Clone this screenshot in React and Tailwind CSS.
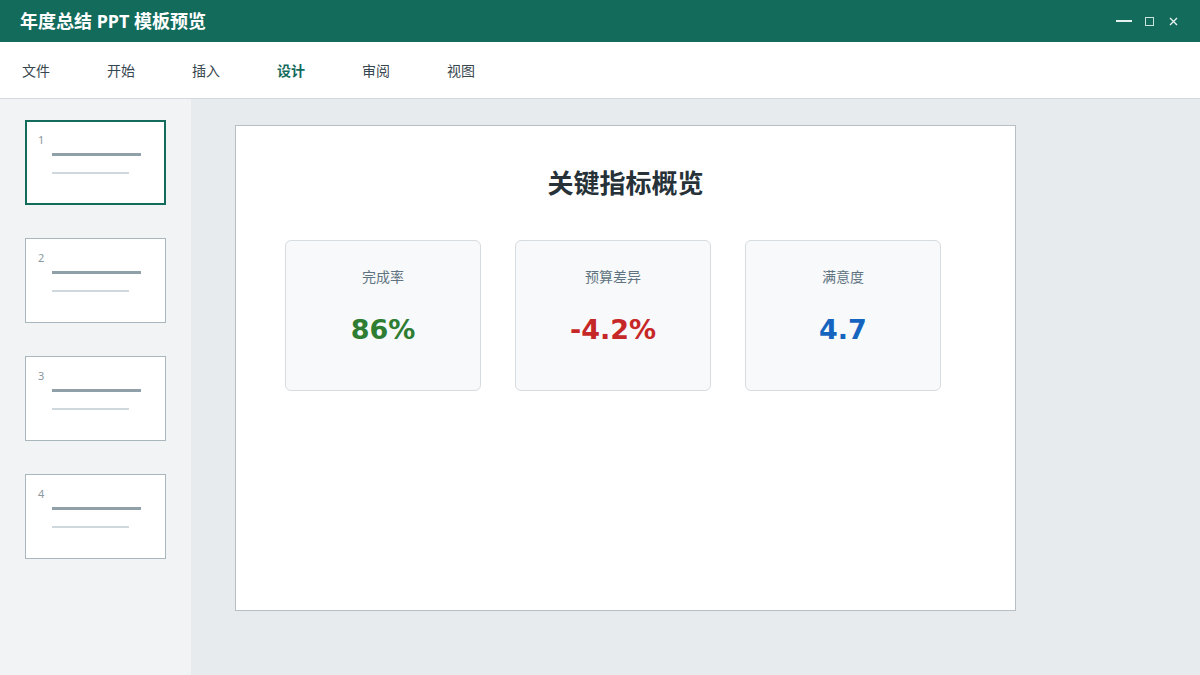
import React from 'react';

const menus = ['文件', '开始', '插入', '设计', '审阅', '视图'];
const slides = [1, 2, 3, 4];
const metrics = [
    { label: '完成率', value: '86%', color: 'text-[#2e7d32]' },
    { label: '预算差异', value: '-4.2%', color: 'text-[#c62828]' },
    { label: '满意度', value: '4.7', color: 'text-[#1565c0]' },
];

const App = () => {
    return (
        <div
            className="w-[1200px] h-[675px] flex flex-col overflow-hidden bg-[#e8ebee]"
            style={{ fontFamily: "'Noto Sans', 'Noto Sans CJK SC', sans-serif" }}
        >
            {/* title bar */}
            <div className="h-[42px] shrink-0 bg-[#136b5c] flex items-center justify-between pl-5 pr-[22px]">
                <h1 className="text-white text-[18px] font-bold leading-none">年度总结 PPT 模板预览</h1>
                <div className="flex items-center gap-[13px] text-[#dfeeea]">
                    <span className="block w-[16px] h-[2px] bg-[#e6f2ef]"></span>
                    <span className="block w-[9px] h-[9px] border border-[#cfe3de]"></span>
                    <svg width="9" height="9" viewBox="0 0 9 9" className="ml-[2px]">
                        <path d="M1 1L8 8M8 1L1 8" stroke="#e6f2ef" strokeWidth="1.4" />
                    </svg>
                </div>
            </div>

            {/* menu */}
            <div className="h-[57px] shrink-0 bg-white border-b border-[#d3d9de] flex items-center pl-[22px]">
                {menus.map((m) => (
                    <span
                        key={m}
                        className={`w-[85px] text-[14px] ${m === '设计' ? 'font-bold text-[#136b5c]' : 'text-[#37474f]'}`}
                    >
                        {m}
                    </span>
                ))}
            </div>

            <div className="flex flex-1 min-h-0">
                {/* slide thumbnails */}
                <aside className="w-[191px] shrink-0 bg-[#f1f3f5] pt-[21px] pl-[25px] flex flex-col gap-[33px]">
                    {slides.map((n) => (
                        <div
                            key={n}
                            className={`w-[141px] h-[85px] bg-white relative ${
                                n === 1 ? 'border-2 border-[#136b5c]' : 'border border-[#aab6be]'
                            }`}
                        >
                            <span
                                className={`absolute text-[11px] leading-none text-[#8a979e] ${
                                    n === 1 ? 'left-[11px] top-[12px]' : 'left-[12px] top-[13px]'
                                }`}
                            >
                                {n}
                            </span>
                            <div
                                className={`absolute h-[3px] w-[89px] bg-[#8fa0a8] ${
                                    n === 1 ? 'left-[25px] top-[31px]' : 'left-[26px] top-[32px]'
                                }`}
                            ></div>
                            <div
                                className={`absolute h-[2px] w-[77px] bg-[#cfd8dc] ${
                                    n === 1 ? 'left-[25px] top-[50px]' : 'left-[26px] top-[51px]'
                                }`}
                            ></div>
                        </div>
                    ))}
                </aside>

                {/* slide canvas */}
                <main className="flex-1 pt-[26px] pl-[44px]">
                    <div className="w-[781px] h-[486px] bg-white border border-[#b7bfc5] pt-[38px] pl-[49px]">
                        <h2 className="text-center text-[26px] font-bold text-[#263238] leading-[38px] -ml-[49px]">
                            关键指标概览
                        </h2>
                        <div className="flex gap-[34px] mt-[38px]">
                            {metrics.map((m) => (
                                <div
                                    key={m.label}
                                    className="w-[196px] h-[151px] bg-[#f8f9fb] border border-[#d6dce0] rounded-[6px] flex flex-col items-center pt-[26px]"
                                >
                                    <span className="text-[14px] text-[#5f7480] leading-[20px]">{m.label}</span>
                                    <span
                                        className={`mt-[23px] text-[27px] font-bold leading-[40px] ${m.color}`}
                                        style={{ fontFamily: "'DejaVu Sans', sans-serif" }}
                                    >
                                        {m.value}
                                    </span>
                                </div>
                            ))}
                        </div>
                    </div>
                </main>
            </div>
        </div>
    );
};

export default App;
